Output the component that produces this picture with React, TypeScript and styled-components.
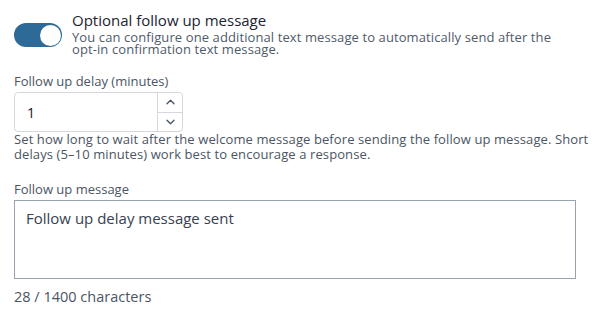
import React, { useState } from "react";
import styled, { createGlobalStyle } from "styled-components";

const Global = createGlobalStyle`
  html, body { margin: 0; padding: 0; background: #fff; }
  body { font-family: "Open Sans", "Noto Sans", sans-serif; }
  * { box-sizing: border-box; }
`;

const Page = styled.div`
  width: 599px;
  padding: 10px 6px 0 14px;
  display: flex;
  flex-direction: column;
`;

const ToggleRow = styled.div`
  display: flex;
  align-items: flex-start;
  gap: 10px;
`;

const Switch = styled.button<{ $on: boolean }>`
  flex: none;
  margin-top: 13px;
  width: 48px;
  height: 24px;
  border-radius: 12px;
  border: none;
  padding: 0;
  background: ${(p) => (p.$on ? "#2e6a98" : "#d1d5db")};
  position: relative;
  cursor: pointer;
`;

const Knob = styled.span<{ $on: boolean }>`
  position: absolute;
  top: 1.5px;
  left: ${(p) => (p.$on ? "25.5px" : "1.5px")};
  width: 21px;
  height: 21px;
  border-radius: 50%;
  background: #fff;
`;

const ToggleText = styled.div`
  display: flex;
  flex-direction: column;
  max-width: 490px;
`;

const Title = styled.div`
  font-size: 15px;
  font-weight: 500;
  color: #1c2430;
  line-height: 18px;
  margin: 1px 0 2px;
`;

const Sub = styled.div`
  font-size: 13px;
  font-weight: 500;
  letter-spacing: 0.1px;
  color: #4f5b6a;
  line-height: 12px;
`;

const Label = styled.div<{ $mt: number }>`
  margin-top: ${(p) => p.$mt}px;
  font-size: 13px;
  color: #4b5563;
  line-height: 18px;
`;

const NumberBox = styled.div`
  margin-top: 2px;
  width: 169px;
  height: 40px;
  border: 1px solid #d4d8de;
  border-radius: 4px;
  display: flex;
`;

const NumberInput = styled.input`
  flex: 1;
  min-width: 0;
  border: none;
  outline: none;
  background: transparent;
  padding: 0 12px;
  font-family: inherit;
  font-size: 14px;
  color: #111827;
`;

const Steppers = styled.div`
  width: 25px;
  border-left: 1px solid #d4d8de;
  display: flex;
  flex-direction: column;
`;

const Step = styled.button<{ $top?: boolean }>`
  flex: 1;
  border: none;
  background: transparent;
  padding: 0;
  display: flex;
  align-items: center;
  justify-content: center;
  border-bottom: ${(p) => (p.$top ? "1px solid #d4d8de" : "none")};
  cursor: pointer;
`;

const Help = styled.div`
  font-size: 13px;
  letter-spacing: 0.1px;
  color: #4b5563;
  line-height: 15px;
`;

const TextArea = styled.textarea`
  margin-top: 2px;
  width: 562px;
  height: 79px;
  border: 1.5px solid #9aa3ad;
  border-radius: 0;
  padding: 7px 11px;
  resize: none;
  font-family: inherit;
  font-size: 15px;
  color: #374151;
  outline: none;
  line-height: 20px;
`;

const Counter = styled.div`
  margin-top: 8px;
  font-size: 14.5px;
  line-height: 20px;
  color: #4b5563;
`;

const Chevron = ({ up }: { up?: boolean }) => (
  <svg width="9" height="6" viewBox="0 0 9 6" fill="none">
    <path
      d={up ? "M1 4.8L4.5 1.2L8 4.8" : "M1 1.2L4.5 4.8L8 1.2"}
      stroke="#4b5563"
      strokeWidth="1.3"
      strokeLinecap="round"
      strokeLinejoin="round"
    />
  </svg>
);

export default function App() {
  const [on, setOn] = useState(true);
  const [delay, setDelay] = useState("1");
  const [msg, setMsg] = useState("Follow up delay message sent");
  return (
    <>
      <Global />
      <Page>
        <ToggleRow>
          <Switch $on={on} onClick={() => setOn(!on)}>
            <Knob $on={on} />
          </Switch>
          <ToggleText>
            <Title>Optional follow up message</Title>
            <Sub>
              You can configure one additional text message to automatically send after the
              opt-in confirmation text message.
            </Sub>
          </ToggleText>
        </ToggleRow>
        <Label $mt={17}>Follow up delay (minutes)</Label>
        <NumberBox>
          <NumberInput value={delay} onChange={(e) => setDelay(e.target.value)} />
          <Steppers>
            <Step $top onClick={() => setDelay(String((parseInt(delay) || 0) + 1))}>
              <Chevron up />
            </Step>
            <Step onClick={() => setDelay(String(Math.max(0, (parseInt(delay) || 0) - 1)))}>
              <Chevron />
            </Step>
          </Steppers>
        </NumberBox>
        <Help>
          Set how long to wait after the welcome message before sending the follow up message.
          Short delays (5–10 minutes) work best to encourage a response.
        </Help>
        <Label $mt={18}>Follow up message</Label>
        <TextArea value={msg} onChange={(e) => setMsg(e.target.value)} />
        <Counter>{msg.length} / 1400 characters</Counter>
      </Page>
    </>
  );
}
